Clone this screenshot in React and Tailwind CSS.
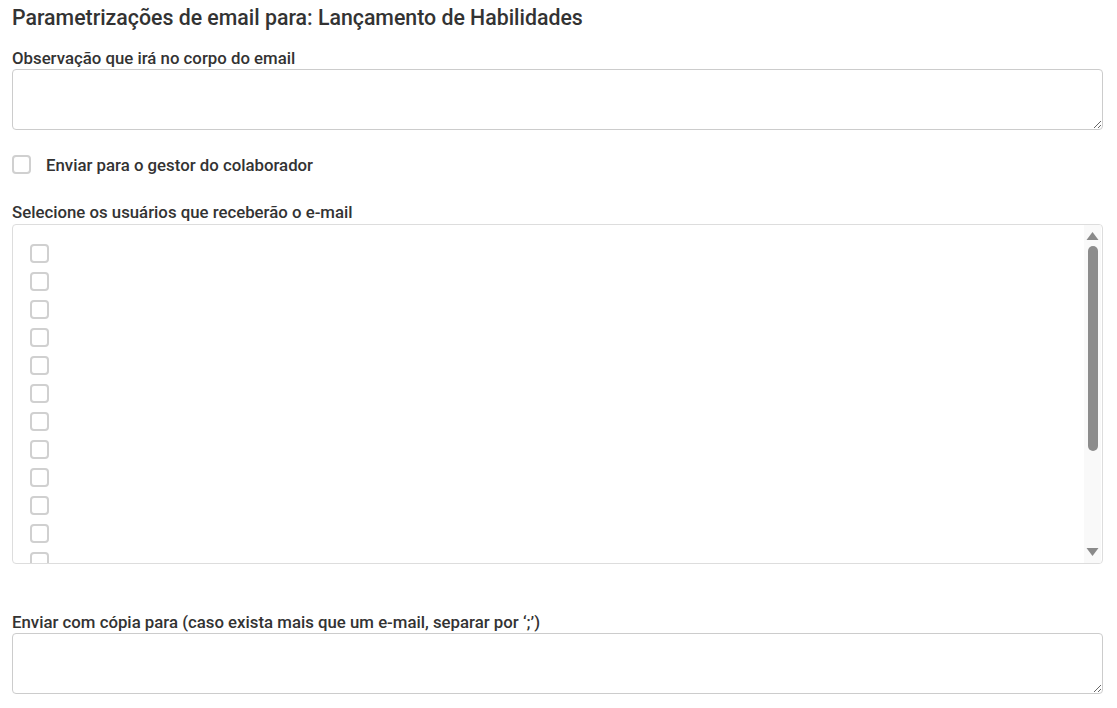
import { useState } from "react";

const usuarios = Array.from({ length: 12 }, (_, i) => i);

function Caixa({ className = "" }) {
  return (
    <span
      className={`block w-[19px] h-[19px] border-2 border-[#d0d0d0] rounded-[4px] bg-white shrink-0 ${className}`}
    />
  );
}

export default function App() {
  const [gestor, setGestor] = useState(false);

  return (
    <div
      className="w-[1117px] h-[708px] bg-white text-[#333] px-3 overflow-hidden"
      style={{ fontFamily: "Roboto, 'Liberation Sans', sans-serif" }}
    >
      <h1 className="text-[21.3px] font-medium leading-[22px] pt-[7px]">
        Parametrizações de email para: Lançamento de Habilidades
      </h1>

      <label className="block text-[16.8px] font-medium leading-[18px] mt-[20px]">
        Observação que irá no corpo do email
      </label>
      <textarea className="block w-[1091px] h-[61px] mt-[2px] border border-[#ccc] rounded-[4px] outline-none resize-y p-2" />

      <div
        className="flex items-center gap-[15px] mt-[25px] cursor-pointer"
        onClick={() => setGestor(!gestor)}
      >
        <Caixa />
        <span className="text-[16.8px] font-medium leading-[18px]">
          Enviar para o gestor do colaborador
        </span>
      </div>

      <label className="block text-[16.8px] font-medium leading-[18px] mt-[29px]">
        Selecione os usuários que receberão o e-mail
      </label>
      <div className="flex w-[1091px] h-[340px] mt-[3px] border border-[#ddd] rounded-[4px] overflow-hidden">
        <div className="flex-1 overflow-hidden pt-[19px] pl-[17px] flex flex-col gap-[9px]">
          {usuarios.map((u) => (
            <Caixa key={u} />
          ))}
        </div>
        <div className="w-[17px] mr-[1px] bg-[#f9f9f9] flex flex-col items-center pt-[6px] pb-[6px]">
          <svg width="13" height="10" viewBox="0 0 13 10" className="shrink-0">
            <path d="M6.5 1 L12.5 9 L0.5 9 Z" fill="#8a8a8a" />
          </svg>
          <div className="w-[10px] h-[205px] mt-[5px] rounded-full bg-[#8c8c8c]" />
          <div className="flex-1" />
          <svg width="13" height="10" viewBox="0 0 13 10" className="shrink-0">
            <path d="M0.5 1 L12.5 1 L6.5 9 Z" fill="#8a8a8a" />
          </svg>
        </div>
      </div>

      <label className="block text-[16.8px] font-medium leading-[18px] mt-[49px]">
        Enviar com cópia para (caso exista mais que um e-mail, separar por ‘;’)
      </label>
      <textarea className="block w-[1091px] h-[61px] mt-[2px] border border-[#ccc] rounded-[4px] outline-none resize-y p-2" />
    </div>
  );
}
